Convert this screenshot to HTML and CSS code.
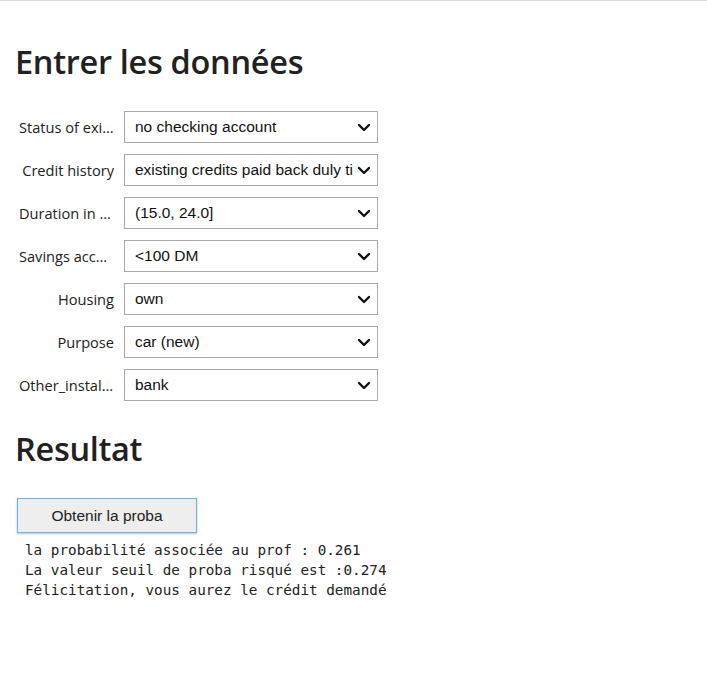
FILE: index.html
```html
<!DOCTYPE html>
<html lang="fr">
<head>
<meta charset="utf-8">
<title>Entrer les données</title>
<link rel="stylesheet" href="styles.css">
</head>
<body>
<div class="page">
  <h1 class="title first">Entrer les données</h1>
  <div class="form">
    <div class="row">
      <label class="lbl">Status of existing checking account</label>
      <div class="select"><span class="val">no checking account</span><svg class="chev" width="14" height="9" viewBox="0 0 14 9"><polyline points="2,2 7,7 12,2" fill="none" stroke="#111" stroke-width="2.4" stroke-linecap="round" stroke-linejoin="round"/></svg></div>
    </div>
    <div class="row">
      <label class="lbl">Credit history</label>
      <div class="select"><span class="val">existing credits paid back duly till now</span><svg class="chev" width="14" height="9" viewBox="0 0 14 9"><polyline points="2,2 7,7 12,2" fill="none" stroke="#111" stroke-width="2.4" stroke-linecap="round" stroke-linejoin="round"/></svg></div>
    </div>
    <div class="row">
      <label class="lbl">Duration in month</label>
      <div class="select"><span class="val">(15.0, 24.0]</span><svg class="chev" width="14" height="9" viewBox="0 0 14 9"><polyline points="2,2 7,7 12,2" fill="none" stroke="#111" stroke-width="2.4" stroke-linecap="round" stroke-linejoin="round"/></svg></div>
    </div>
    <div class="row">
      <label class="lbl">Savings account/bonds</label>
      <div class="select"><span class="val">&lt;100 DM</span><svg class="chev" width="14" height="9" viewBox="0 0 14 9"><polyline points="2,2 7,7 12,2" fill="none" stroke="#111" stroke-width="2.4" stroke-linecap="round" stroke-linejoin="round"/></svg></div>
    </div>
    <div class="row">
      <label class="lbl">Housing</label>
      <div class="select"><span class="val">own</span><svg class="chev" width="14" height="9" viewBox="0 0 14 9"><polyline points="2,2 7,7 12,2" fill="none" stroke="#111" stroke-width="2.4" stroke-linecap="round" stroke-linejoin="round"/></svg></div>
    </div>
    <div class="row">
      <label class="lbl">Purpose</label>
      <div class="select"><span class="val">car (new)</span><svg class="chev" width="14" height="9" viewBox="0 0 14 9"><polyline points="2,2 7,7 12,2" fill="none" stroke="#111" stroke-width="2.4" stroke-linecap="round" stroke-linejoin="round"/></svg></div>
    </div>
    <div class="row">
      <label class="lbl">Other_installment_plans</label>
      <div class="select"><span class="val">bank</span><svg class="chev" width="14" height="9" viewBox="0 0 14 9"><polyline points="2,2 7,7 12,2" fill="none" stroke="#111" stroke-width="2.4" stroke-linecap="round" stroke-linejoin="round"/></svg></div>
    </div>
  </div>
  <h1 class="title second">Resultat</h1>
  <button class="btn" type="button">Obtenir la proba</button>
  <pre class="output">la probabilité associée au prof : 0.261
La valeur seuil de proba risqué est :0.274
Félicitation, vous aurez le crédit demandé</pre>
</div>
</body>
</html>
```

FILE: styles.css
```css
html, body {
  margin: 0;
  padding: 0;
  background: #ffffff;
}

body {
  border-top: 1px solid #dcdcdc;
  font-family: "Open Sans", "Noto Sans", sans-serif;
  color: #212121;
}

.page {
  padding: 0 0 40px 15px;
  display: flex;
  flex-direction: column;
  align-items: flex-start;
}

.title {
  margin: 0;
  font-family: "Open Sans", sans-serif;
  font-weight: 600;
  font-size: 32.5px;
  line-height: 40px;
  color: #212121;
  letter-spacing: -0.3px;
}

.first {
  margin-top: 41px;
}

.second {
  margin-top: 28px;
}

.form {
  margin: 29px 0 0 4px;
  display: flex;
  flex-direction: column;
  gap: 11px;
}

.row {
  display: flex;
  align-items: center;
  gap: 10px;
}

.lbl {
  box-sizing: border-box;
  width: 95px;
  font-size: 14.6px;
  color: #222;
  text-align: right;
  white-space: nowrap;
  overflow: hidden;
  text-overflow: ellipsis;
}

.select {
  box-sizing: border-box;
  width: 254px;
  height: 32px;
  border: 1px solid #a8a8a8;
  background: #fff;
  display: flex;
  align-items: center;
  padding: 0 6px 0 10px;
  gap: 4px;
}

.val {
  flex: 1;
  min-width: 0;
  overflow: hidden;
  white-space: nowrap;
  font-family: "Liberation Sans", Arial, sans-serif;
  font-size: 15.5px;
  color: #111;
}

.chev {
  flex: none;
}

.btn {
  margin: 29px 0 0 2px;
  width: 180px;
  height: 35px;
  background: #eeeeee;
  border: 1px solid #64b5f6;
  box-shadow: 0 1px 2px rgba(0, 0, 0, 0.25);
  font-family: "Liberation Sans", Arial, sans-serif;
  font-size: 15.5px;
  color: #222;
  padding: 0;
}

.output {
  margin: 7px 0 0 10px;
  font-family: "DejaVu Sans Mono", monospace;
  font-size: 14.3px;
  line-height: 20px;
  color: #222;
}
```
